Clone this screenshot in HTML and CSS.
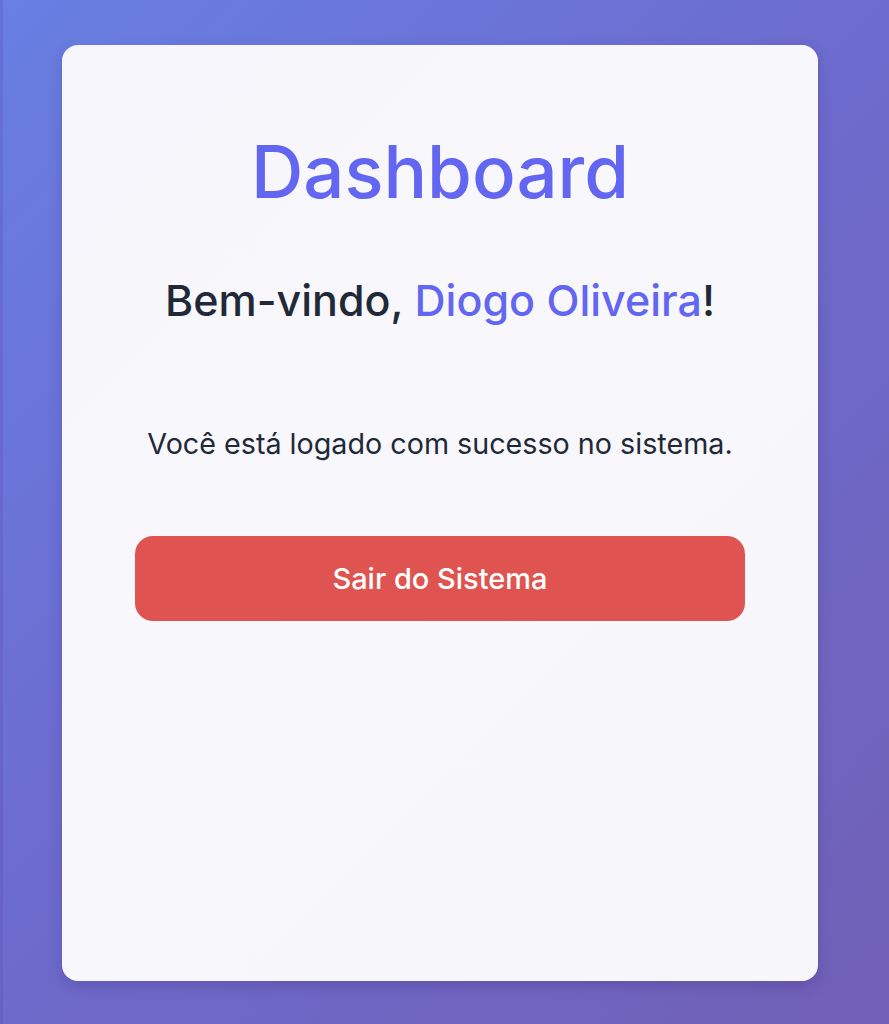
FILE: index.html
```html
<!DOCTYPE html>
<html lang="pt">
<head>
<meta charset="utf-8">
<title>Dashboard</title>
<link rel="stylesheet" href="styles.css">
</head>
<body>
<main class="page">
  <section class="card">
    <h1 class="title">Dashboard</h1>
    <h2 class="welcome">Bem-vindo, <span class="name">Diogo Oliveira</span>!</h2>
    <p class="message">Você está logado com sucesso no sistema.</p>
    <button class="logout" type="button">Sair do Sistema</button>
  </section>
</main>
</body>
</html>
```

FILE: styles.css
```css
html, body {
  margin: 0;
  height: 100%;
}
body {
  font-family: Inter, "Noto Sans", sans-serif;
  background: linear-gradient(135deg, #687fe3 0%, #6d6ccf 45%, #7160b6 100%);
  box-shadow: inset 3px 0 0 rgba(90, 70, 180, 0.25);
}
.page {
  box-sizing: border-box;
  height: 100%;
  padding: 45px 71px 43px 62px;
  display: flex;
}
.card {
  flex: 1;
  box-sizing: border-box;
  background: linear-gradient(135deg, #f5f5fb 0%, #f8f8fc 40%, #f6f6fb 100%);
  border-radius: 16px;
  box-shadow: 0 6px 14px rgba(60, 40, 120, 0.25);
  padding: 0 73px;
  display: flex;
  flex-direction: column;
  align-items: center;
  text-align: center;
}
.title {
  margin: 83px 0 0;
  font-size: 72.5px;
  font-weight: 500;
  line-height: 88px;
  color: #6366f1;
}
.welcome {
  margin: 58px 0 0;
  font-size: 43px;
  font-weight: 500;
  line-height: 52px;
  color: #1f2937;
}
.name {
  color: #6366f1;
}
.message {
  margin: 100px 0 0;
  font-size: 28.7px;
  line-height: 36px;
  color: #1f2937;
}
.logout {
  margin-top: 74px;
  width: 100%;
  height: 85px;
  border: 0;
  border-radius: 18px;
  background: #df5450;
  color: #ffffff;
  font-family: inherit;
  font-size: 29px;
  font-weight: 500;
}
```
